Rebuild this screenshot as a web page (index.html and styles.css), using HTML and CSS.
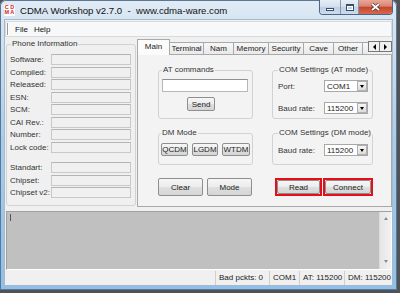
FILE: index.html
```html
<!DOCTYPE html>
<html lang="en">
<head>
    <meta charset="UTF-8">
    <meta name="viewport" content="width=device-width, initial-scale=1.0">
    <title>CDMA Workshop v2.7.0</title>
    <link rel="stylesheet" href="styles.css">
</head>
<body>
    <div class="window">
        <!-- title bar -->
        <div class="titlebar">
            <div class="app-icon"><span>C</span><span>D</span><span>M</span><span>A</span></div>
            <div class="title">CDMA Workshop v2.7.0 &nbsp;-&nbsp; www.cdma-ware.com</div>
            <div class="caption-btns">
                <div class="cap-btn cap-min"><span class="min-glyph"></span></div>
                <div class="cap-btn cap-max"><span class="max-glyph"></span></div>
                <div class="cap-btn cap-close">
                    <svg width="11" height="8" viewBox="0 0 11 8"><path d="M2 1 L9 7 M9 1 L2 7" stroke="#3b2a2a" stroke-width="3"/><path d="M2 1 L9 7 M9 1 L2 7" stroke="#fff" stroke-width="1.8"/></svg>
                </div>
            </div>
        </div>

        <div class="client">
            <div class="menubar">
                <span class="grip"></span>
                <span class="menu-item">File</span>
                <span class="menu-item">Help</span>
            </div>

            <div class="workarea">
                <!-- phone info -->
                <fieldset class="group phone-info">
                    <legend>Phone Information</legend>
                    <div class="info-rows">
                        <div class="info-row"><label>Software:</label><span class="ro-box"></span></div>
                        <div class="info-row"><label>Compiled:</label><span class="ro-box"></span></div>
                        <div class="info-row"><label>Released:</label><span class="ro-box"></span></div>
                        <div class="info-row"><label>ESN:</label><span class="ro-box"></span></div>
                        <div class="info-row"><label>SCM:</label><span class="ro-box"></span></div>
                        <div class="info-row"><label>CAI Rev.:</label><span class="ro-box"></span></div>
                        <div class="info-row"><label>Number:</label><span class="ro-box"></span></div>
                        <div class="info-row"><label>Lock code:</label><span class="ro-box"></span></div>
                    </div>
                    <div class="info-rows info-rows-2">
                        <div class="info-row"><label>Standart:</label><span class="ro-box"></span></div>
                        <div class="info-row"><label>Chipset:</label><span class="ro-box"></span></div>
                        <div class="info-row"><label>Chipset v2:</label><span class="ro-box"></span></div>
                    </div>
                </fieldset>

                <!-- tabs -->
                <div class="tabctrl">
                    <div class="tabstrip">
                        <div class="tab active w-main">Main</div>
                        <div class="tab w-terminal">Terminal</div>
                        <div class="tab w-nam">Nam</div>
                        <div class="tab w-memory">Memory</div>
                        <div class="tab w-security">Security</div>
                        <div class="tab w-cave">Cave</div>
                        <div class="tab w-other">Other</div>
                        <div class="tab partial"></div>
                        <div class="tab-arrows">
                            <span class="arrow-btn"><i class="tri-left"></i></span>
                            <span class="arrow-btn"><i class="tri-right"></i></span>
                        </div>
                    </div>
                    <div class="tabpage">
                        <div class="tp-col tp-left">
                            <fieldset class="group at-group">
                                <legend>AT commands</legend>
                                <div class="edit"></div>
                                <button class="btn send-btn">Send</button>
                            </fieldset>
                            <fieldset class="group dm-group">
                                <legend>DM Mode</legend>
                                <div class="dm-btns">
                                    <button class="btn w-qcdm">QCDM</button>
                                    <button class="btn w-lgdm">LGDM</button>
                                    <button class="btn w-wtdm">WTDM</button>
                                </div>
                            </fieldset>
                            <div class="action-row">
                                <button class="btn w-act">Clear</button>
                                <button class="btn w-act">Mode</button>
                            </div>
                        </div>
                        <div class="tp-col tp-right">
                            <fieldset class="group com-at">
                                <legend>COM Settings (AT mode)</legend>
                                <div class="combo-row">
                                    <span class="combo-label">Port:</span>
                                    <div class="combo"><span>COM1</span><i class="drop"><b class="tri-down"></b></i></div>
                                </div>
                                <div class="combo-row">
                                    <span class="combo-label">Baud rate:</span>
                                    <div class="combo"><span>115200</span><i class="drop"><b class="tri-down"></b></i></div>
                                </div>
                            </fieldset>
                            <fieldset class="group com-dm">
                                <legend>COM Settings (DM mode)</legend>
                                <div class="combo-row">
                                    <span class="combo-label">Baud rate:</span>
                                    <div class="combo"><span>115200</span><i class="drop"><b class="tri-down"></b></i></div>
                                </div>
                            </fieldset>
                            <div class="action-row hl-row">
                                <span class="hl hl-read"><button class="btn">Read</button></span>
                                <span class="hl hl-connect"><button class="btn">Connect</button></span>
                            </div>
                        </div>
                    </div>
                </div>
            </div>

            <div class="splitter"></div>

            <!-- log -->
            <div class="log">
                <div class="log-text"><span class="caret"></span></div>
                <div class="vscroll"><i class="sb-up"></i><i class="sb-down"></i></div>
            </div>

            <div class="statusbar">
                <div class="panel p-main"></div>
                <div class="panel p-bad">Bad pckts: 0</div>
                <div class="panel p-com">COM1</div>
                <div class="panel p-at">AT: 115200</div>
                <div class="panel p-dm">DM: 115200</div>
            </div>
        </div>
    </div>
</body>
</html>
```

FILE: styles.css
```css
* {
    box-sizing: border-box;
}

body {
    margin: 0;
    background-color: #4f5358;
    font-family: "Liberation Sans", Arial, sans-serif;
    font-size: 8px;
    color: #222;
}

/* window frame */
.window {
    width: 397px;
    height: 290px;
    display: flex;
    flex-direction: column;
    background: linear-gradient(to bottom, #e2ebf5 0, #d6e5f3 20px, #a8cdec 140px, #8ec0e9 100%);
    box-shadow: inset 0 0 0 1px #5b7796;
    border-radius: 6px 6px 0 0;
}

.titlebar {
    height: 20px;
    display: flex;
    align-items: center;
    flex-shrink: 0;
}

.app-icon {
    width: 11px;
    height: 11px;
    margin-left: 4px;
    display: grid;
    grid-template-columns: 1fr 1fr;
    background-color: #fff;
    color: #d41a1a;
    font-size: 5.5px;
    font-weight: bold;
    line-height: 5.5px;
    text-align: center;
}

.title {
    margin-left: 5px;
    font-size: 9.6px;
    color: #111;
    white-space: nowrap;
}

.caption-btns {
    margin-left: auto;
    margin-right: 4px;
    align-self: flex-start;
    display: flex;
    height: 15px;
    border: 1px solid #4d6583;
    border-top: none;
    border-radius: 0 0 4px 4px;
    overflow: hidden;
}

.cap-btn {
    height: 100%;
    display: flex;
    align-items: center;
    justify-content: center;
}

.cap-min,
.cap-max {
    background: linear-gradient(to bottom, #e7eef6, #d2dfec 50%, #bccfe4 50%, #cddcee);
    border-right: 1px solid #8197b2;
}

.cap-min {
    width: 21px;
}

.cap-max {
    width: 18px;
}

.cap-close {
    width: 33px;
    background: linear-gradient(to bottom, #e9a899, #d98370 45%, #c7442c 50%, #d5694f);
}

.min-glyph {
    width: 8px;
    height: 3px;
    margin-top: 5px;
    background-color: #fff;
    border: 1px solid #3b4e68;
}

.max-glyph {
    width: 8px;
    height: 7px;
    border: 1px solid #3b4e68;
    border-top-width: 2px;
    box-shadow: inset 0 0 0 1px #fff;
}

/* client area */
.client {
    flex: 1;
    margin: 0 5px 5px 5px;
    background-color: #f0f0f0;
    display: flex;
    flex-direction: column;
    box-shadow: 0 0 0 1px #a9b9ca;
}

.menubar {
    height: 16px;
    margin-top: 1px;
    display: flex;
    align-items: center;
    padding-left: 1px;
    background-color: #f7f8f9;
    border: 1px solid #d9dadc;
    flex-shrink: 0;
}

.grip {
    width: 2px;
    height: 12px;
    border-left: 1px solid #9a9a9a;
    border-right: 1px solid #fff;
    margin-right: 6px;
}

.menu-item {
    margin-right: 6px;
    color: #111;
}

.workarea {
    height: 171px;
    display: flex;
    flex-shrink: 0;
}

/* group boxes */
.group {
    margin: 0;
    padding: 0;
    border: 1px solid #d2d2d2;
    border-radius: 3px;
    min-width: 0;
}

.group legend {
    padding: 0 1px;
    line-height: 10px;
    height: 10px;
    color: #333;
    white-space: nowrap;
}

.phone-info {
    width: 130px;
    height: 167px;
    margin: 2px 0 2px 1px;
    padding: 5px 4px 0 3px;
}

.phone-info legend {
    margin-left: 1px;
}

.info-rows {
    display: flex;
    flex-direction: column;
    gap: 1.5px;
}

.info-rows-2 {
    margin-top: 9.5px;
}

.info-row {
    height: 11px;
    display: flex;
    align-items: center;
}

.info-row label {
    width: 41px;
    color: #333;
    white-space: nowrap;
}

.ro-box {
    width: 80px;
    height: 11px;
    background-color: #f0f0f0;
    border: 1px solid #c8c8c8;
    border-top-color: #b4b4b4;
}

/* tab control */
.tabctrl {
    width: 255px;
    margin-left: 1px;
    padding-top: 2px;
    display: flex;
    flex-direction: column;
}

.tabstrip {
    height: 15px;
    display: flex;
    align-items: flex-end;
    position: relative;
    z-index: 1;
}

.tab {
    height: 12px;
    display: flex;
    align-items: center;
    justify-content: center;
    background: linear-gradient(to bottom, #f7f7f7, #e9e9e9);
    border-top: 1px solid #a9a9a9;
    border-right: 1px solid #a9a9a9;
    color: #222;
    white-space: nowrap;
    overflow: hidden;
}

.tab.active {
    height: 16px;
    margin-bottom: -1px;
    background: #fbfbfb;
    border-left: 1px solid #a9a9a9;
    padding-bottom: 2px;
}

.w-main { width: 33px; }
.w-terminal { width: 34px; }
.w-nam { width: 30px; }
.w-memory { width: 35px; }
.w-security { width: 35px; }
.w-cave { width: 30px; }
.w-other { width: 29px; }

.tab.partial {
    width: 5px;
    border-right: none;
}

.tab-arrows {
    display: flex;
    margin-bottom: 2px;
    height: 11px;
}

.arrow-btn {
    width: 12px;
    height: 11px;
    display: flex;
    align-items: center;
    justify-content: center;
    background-color: #f0f0f0;
    border: 1px solid #777;
}

.arrow-btn + .arrow-btn {
    border-left: none;
}

.tri-left {
    border-top: 3px solid transparent;
    border-bottom: 3px solid transparent;
    border-right: 3px solid #000;
}

.tri-right {
    border-top: 3px solid transparent;
    border-bottom: 3px solid transparent;
    border-left: 3px solid #000;
}

.tabpage {
    height: 153px;
    border: 1px solid #a9a9a9;
    background-color: #f3f3f3;
    display: flex;
    gap: 19px;
    padding: 10px 0 0 20px;
}

.tp-col {
    display: flex;
    flex-direction: column;
}

.tp-left {
    width: 95px;
}

.tp-right {
    width: 101px;
}

.at-group,
.com-at {
    height: 54px;
}

.at-group {
    padding: 4px 4px 0 3px;
}

.edit {
    width: 86px;
    height: 13px;
    background-color: #fff;
    border: 1px solid #b5b7bd;
    border-top-color: #8e9096;
}

.dm-group,
.com-dm {
    height: 37px;
    margin-top: 9px;
}

.dm-group {
    padding: 5px 0 0 2px;
}

.dm-btns {
    display: flex;
    gap: 4px;
}

.dm-btns .btn {
    height: 13px;
}

.w-qcdm { width: 27px; }
.w-lgdm { width: 26px; }
.w-wtdm { width: 28px; }

.action-row {
    height: 18px;
    margin-top: 13px;
    display: flex;
    gap: 4px;
}

.w-act {
    width: 45px;
}

/* buttons */
.btn {
    font-family: inherit;
    font-size: 8px;
    color: #222;
    padding: 0;
    border: 1px solid #8e8e8e;
    border-radius: 2px;
    background: linear-gradient(to bottom, #f6f6f6, #ececec 50%, #dfdfdf 50%, #d5d5d5);
}

.send-btn {
    display: block;
    width: 28px;
    height: 14px;
    margin: 5px 0 0 25px;
}

.com-at {
    padding: 5px 0 0 5px;
}

.com-dm {
    padding: 6px 0 0 5px;
}

.combo-row {
    height: 12px;
    display: flex;
    align-items: center;
}

.combo-row + .combo-row {
    margin-top: 10px;
}

.combo-label {
    width: 46px;
    color: #333;
    white-space: nowrap;
}

.combo {
    width: 44px;
    height: 12px;
    display: flex;
    align-items: center;
    padding-left: 2px;
    background-color: #fff;
    border: 1px solid #a8a8a8;
}

.combo span {
    flex: 1;
}

.drop {
    width: 10px;
    height: 10px;
    display: flex;
    align-items: center;
    justify-content: center;
    background: linear-gradient(to bottom, #f6f6f6, #dcdcdc);
    border: 1px solid #b0b0b0;
}

.tri-down {
    border-left: 2.5px solid transparent;
    border-right: 2.5px solid transparent;
    border-top: 3px solid #000;
}

/* red highlight round Read / Connect */
.hl-row {
    gap: 1px;
    padding-left: 3px;
}

.hl {
    display: flex;
    border: 2px solid #e3101a;
}

.hl .btn {
    width: 100%;
    height: 100%;
}

.hl-read {
    width: 47px;
}

.hl-connect {
    width: 50px;
}

/* log */
.splitter {
    height: 3px;
    flex-shrink: 0;
}

.log {
    height: 59px;
    margin-left: 1px;
    display: flex;
    background-color: #c0c0c0;
    border: 1px solid;
    border-color: #a0a0a0 #fff #fff #a0a0a0;
    flex-shrink: 0;
}

.log-text {
    flex: 1;
    padding: 2px 0 0 3px;
}

.caret {
    display: block;
    width: 1px;
    height: 7px;
    background-color: #555;
}

.vscroll {
    width: 12px;
    display: flex;
    flex-direction: column;
    align-items: center;
    justify-content: space-between;
    padding: 5px 0 6px;
    background: linear-gradient(to right, #e6e6e6, #f2f2f2);
    border-left: 1px solid #dcdcdc;
}

.sb-up {
    border-left: 2.5px solid transparent;
    border-right: 2.5px solid transparent;
    border-bottom: 3px solid #8a8a8a;
}

.sb-down {
    border-left: 2.5px solid transparent;
    border-right: 2.5px solid transparent;
    border-top: 3px solid #8a8a8a;
}

/* status bar */
.statusbar {
    height: 14px;
    margin-top: 1px;
    display: flex;
    background-color: #f0f0f0;
    flex-shrink: 0;
}

.panel {
    padding-left: 3px;
    line-height: 13px;
    white-space: nowrap;
    border-right: 1px solid #cfcfcf;
    color: #222;
}

.p-main { flex: 1; }
.p-bad { width: 54px; }
.p-com { width: 30px; }
.p-at { width: 45px; }
.p-dm { width: 47px; border-right: none; }
```
